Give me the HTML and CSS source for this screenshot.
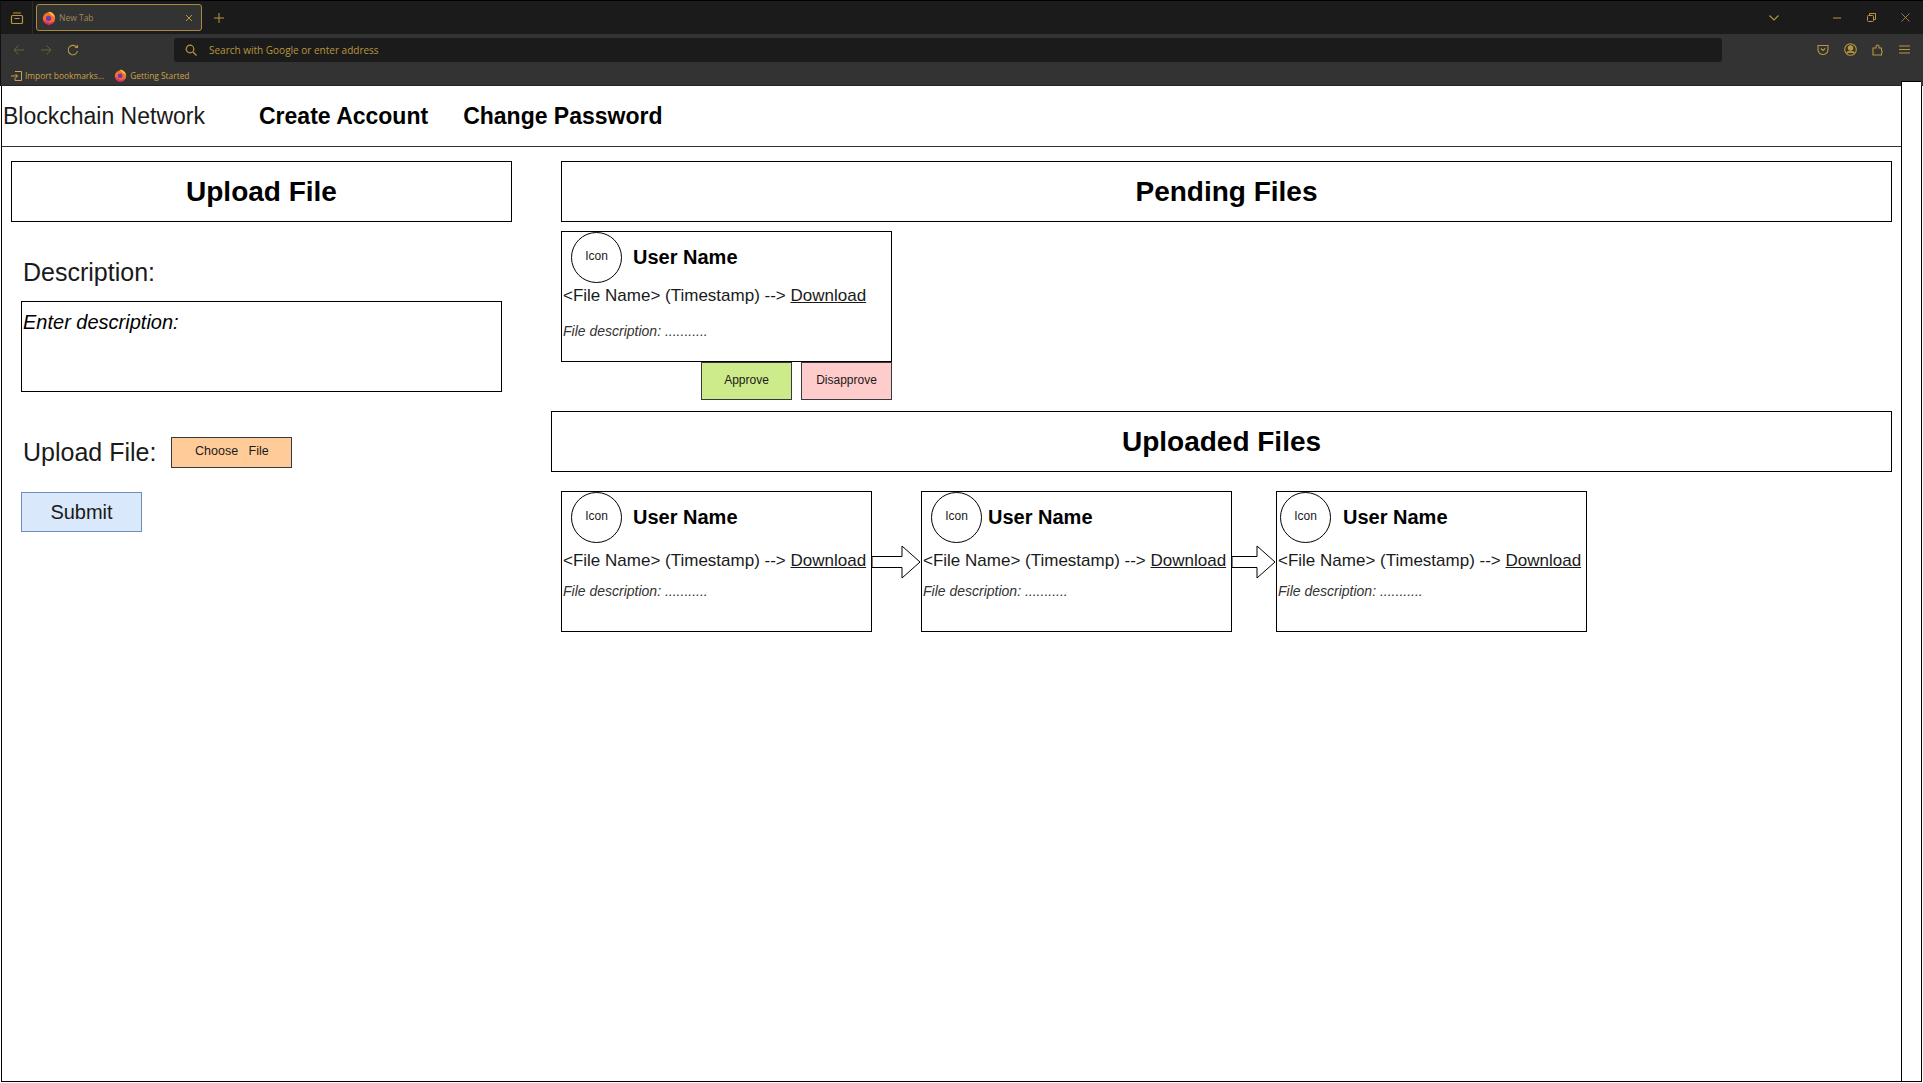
FILE: index.html
```html
<!DOCTYPE html>
<html lang="en">

<head>
    <meta charset="utf-8">
    <meta name="viewport" content="width=device-width, initial-scale=1">
    <title>New Tab</title>
    <link rel="stylesheet" href="styles.css">
</head>

<body>
    <div class="chrome">
        <div class="tabbar">
            <div class="tab-view">
                <svg width="16" height="16" viewBox="0 0 16 16" fill="none" stroke="currentColor" stroke-width="1.2">
                    <rect x="2.5" y="5.5" width="11" height="8" rx="1" />
                    <path d="M4 3h8M5.5 8.500h5" />
                </svg>
            </div>
            <div class="tab">
                <svg class="fx" width="14" height="14" viewBox="0 0 16 16">
                    <circle cx="8" cy="8.500" r="7" fill="#f4702c" />
                    <path d="M7 1c4-.5 7.500 3 8 7-1-1.500-2-2.200-3.500-2.500z" fill="#ffbd2e" />
                    <circle cx="7.500" cy="8.500" r="3" fill="#6a3ab0" />
                    <path d="M1 9c1 4 4 6.500 7 6.500s5-1.500 6-4c-2 2-5 2-7.500 1S2.500 10.500 1 9z" fill="#e8256f" />
                </svg>
                <span class="tab-title">New Tab</span>
                <svg class="tab-close" width="8" height="8" viewBox="0 0 8 8" stroke="currentColor" stroke-width="1">
                    <path d="M1 1l6 6M7 1l-6 6" />
                </svg>
            </div>
            <svg class="new-tab" width="10" height="10" viewBox="0 0 10 10" stroke="currentColor" stroke-width="1">
                <path d="M5 0v10M0 5h10" />
            </svg>
            <div class="tabbar-right">
                <svg class="tab-list" width="10" height="6" viewBox="0 0 10 6" fill="none" stroke="currentColor" stroke-width="1.100">
                    <path d="M.5.5 5 5 9.500.5" />
                </svg>
                <svg class="win-min" width="8" height="2" viewBox="0 0 8 2" stroke="currentColor">
                    <path d="M0 1h8" />
                </svg>
                <svg class="win-max" width="9" height="9" viewBox="0 0 9 9" fill="none" stroke="currentColor">
                    <rect x=".5" y="2.500" width="6" height="6" rx="1" />
                    <path d="M2.500 2.500V.5h6v6H6.500" />
                </svg>
                <svg class="win-close" width="9" height="9" viewBox="0 0 9 9" stroke="currentColor" stroke-width=".8">
                    <path d="M.5.5l8 8M8.500.5l-8 8" />
                </svg>
            </div>
        </div>

        <div class="toolbar">
            <svg class="tool dim back" width="12" height="12" viewBox="0 0 12 12" fill="none" stroke="currentColor">
                <path d="M11 6H1M5.500 1.500 1 6l4.500 4.500" />
            </svg>
            <svg class="tool dim forward" width="12" height="12" viewBox="0 0 12 12" fill="none" stroke="currentColor">
                <path d="M1 6h10M6.500 1.500 11 6l-4.500 4.500" />
            </svg>
            <svg class="tool reload" width="12" height="12" viewBox="0 0 12 12" fill="none" stroke="currentColor" stroke-width="1.100">
                <path d="M10.500 7a4.700 4.700 0 1 1-1.400-4.400" />
                <path d="M11 .5v3.500H7.500z" fill="currentColor" stroke="none" />
            </svg>
            <div class="urlbar">
                <svg width="12" height="12" viewBox="0 0 12 12" fill="none" stroke="currentColor" stroke-width="1.200">
                    <circle cx="5" cy="5" r="3.800" />
                    <path d="m8 8 3.500 3.500" />
                </svg>
                <span>Search with Google or enter address</span>
            </div>
            <div class="tool-right">
                <svg width="12" height="12" viewBox="0 0 12 12" fill="none" stroke="currentColor" stroke-width="1.100">
                    <path d="M1 1.500h10v4a5 5 0 0 1-10 0z" />
                    <path d="M3.800 4.500 6 6.500l2.200-2" />
                </svg>
                <svg width="13" height="13" viewBox="0 0 13 13" fill="none" stroke="currentColor" stroke-width="1.100">
                    <circle cx="6.500" cy="6.500" r="5.800" />
                    <circle cx="6.500" cy="5" r="2.200" fill="currentColor" />
                    <path d="M2.800 10c1-1.500 6.400-1.500 7.400 0" stroke-width="1.600" />
                </svg>
                <svg width="12" height="13" viewBox="0 0 12 13" fill="none" stroke="currentColor" stroke-width="1.100">
                    <path d="M1 12V5h3V3.500a1.500 1.500 0 0 1 3 0V5h2.500v2.500a1.500 1.500 0 0 1 0 2.500V12z" />
                </svg>
                <svg width="11" height="9" viewBox="0 0 11 9" stroke="currentColor">
                    <path d="M0 1h11M0 4.500h11M0 8h11" />
                </svg>
            </div>
        </div>

        <div class="bookmarks">
            <svg width="11" height="10" viewBox="0 0 11 10" fill="none" stroke="currentColor">
                <path d="M4 .5h6.500v9H4V7M0 5h6.500M4.500 3l2 2-2 2" />
            </svg>
            <span class="mark">Import bookmarks...</span>
            <svg class="fx" width="13" height="13" viewBox="0 0 16 16">
                <circle cx="8" cy="8.500" r="7" fill="#f4702c" />
                <path d="M7 1c4-.5 7.500 3 8 7-1-1.500-2-2.200-3.500-2.500z" fill="#ffbd2e" />
                <circle cx="7.500" cy="8.500" r="3" fill="#6a3ab0" />
                <path d="M1 9c1 4 4 6.500 7 6.500s5-1.500 6-4c-2 2-5 2-7.500 1S2.500 10.500 1 9z" fill="#e8256f" />
            </svg>
            <span>Getting Started</span>
        </div>
    </div>

    <div class="frame">
        <div class="main">
            <div class="nav">
                <span class="brand">Blockchain Network</span>
                <a href="#" class="nav-link">Create Account</a>
                <a href="#" class="nav-link">Change Password</a>
            </div>

            <div class="content">
                <div class="left">
                    <h2 class="title-box">Upload File</h2>
                    <label class="field-label desc-label" for="description">Description:</label>
                    <div class="desc-input" id="description">Enter description:</div>
                    <div class="upload-row">
                        <span class="field-label">Upload File:</span>
                        <button type="button" class="choose-btn">Choose &nbsp; File</button>
                    </div>
                    <button type="button" class="submit-btn">Submit</button>
                </div>

                <div class="right">
                    <h2 class="title-box pending-title">Pending Files</h2>

                    <div class="card pending-card">
                        <div class="card-head">
                            <div class="icon">Icon</div>
                            <strong class="user">User Name</strong>
                        </div>
                        <div class="file-line">&lt;File Name&gt; (Timestamp) --&gt; <a href="#">Download</a></div>
                        <div class="file-desc">File description: ...........</div>
                    </div>
                    <div class="actions">
                        <button type="button" class="approve">Approve</button>
                        <button type="button" class="disapprove">Disapprove</button>
                    </div>

                    <h2 class="title-box uploaded-title">Uploaded Files</h2>

                    <div class="chain">
                        <div class="card block">
                            <div class="card-head">
                                <div class="icon">Icon</div>
                                <strong class="user">User Name</strong>
                            </div>
                            <div class="file-line">&lt;File Name&gt; (Timestamp) --&gt; <a href="#">Download</a></div>
                            <div class="file-desc">File description: ...........</div>
                        </div>
                        <svg class="arrow" width="49" height="34" viewBox="0 0 49 34" fill="#fff" stroke="#000">
                            <path d="M0 11.500h30V1l18 16-18 16V22.500H0z" />
                        </svg>
                        <div class="card block block-second">
                            <div class="card-head">
                                <div class="icon">Icon</div>
                                <strong class="user">User Name</strong>
                            </div>
                            <div class="file-line">&lt;File Name&gt; (Timestamp) --&gt; <a href="#">Download</a></div>
                            <div class="file-desc">File description: ...........</div>
                        </div>
                        <svg class="arrow" width="44" height="34" viewBox="0 0 44 34" fill="#fff" stroke="#000">
                            <path d="M0 11.500h25V1l18 16-18 16V22.500H0z" />
                        </svg>
                        <div class="card block block-third">
                            <div class="card-head">
                                <div class="icon">Icon</div>
                                <strong class="user">User Name</strong>
                            </div>
                            <div class="file-line">&lt;File Name&gt; (Timestamp) --&gt; <a href="#">Download</a></div>
                            <div class="file-desc">File description: ...........</div>
                        </div>
                    </div>
                </div>
            </div>
        </div>
        <div class="scrollbar"></div>
    </div>
</body>

</html>
```

FILE: styles.css
```css
* {
    box-sizing: border-box;
}

html,
body {
    height: 100%;
}

body {
    margin: 0;
    background-color: #ffffff;
    font-family: "Liberation Sans", Arial, sans-serif;
    color: #000000;
    overflow: hidden;
}

/* browser window */
.chrome {
    height: 86px;
    background-color: #333333;
    color: #b8963f;
    font-family: "Open Sans", "Noto Sans", sans-serif;
    border-top: 1px solid #000000;
    border-left: 1px solid #111111;
    border-bottom: 1px solid #232323;
}

.tabbar {
    height: 33px;
    display: flex;
    align-items: center;
    background-color: #1c1b1b;
}

.tab-view {
    width: 32px;
    height: 33px;
    display: flex;
    align-items: center;
    justify-content: center;
    border-right: 1px solid #2b2a26;
}

.tab {
    width: 166px;
    height: 27px;
    margin-left: 3px;
    padding: 0 8px 0 5px;
    display: flex;
    align-items: center;
    border: 1px solid #a88a3c;
    border-radius: 3px;
    background-color: #333333;
    font-size: 8.5px;
}

.tab-title {
    margin-left: 3px;
    flex: 1;
    color: #9c8a58;
}

.new-tab {
    margin-left: 12px;
}

.tabbar-right {
    margin-left: auto;
    display: flex;
    align-items: center;
}

.tab-list {
    margin-right: 54px;
}

.win-min {
    margin-right: 26px;
}

.win-max {
    margin-right: 25px;
}

.win-close {
    margin-right: 13px;
}

.toolbar {
    height: 33px;
    padding-bottom: 2px;
    display: flex;
    align-items: center;
}

.tool {
    flex: none;
    margin-left: 13px;
}

.back {
    margin-left: 12px;
}

.tool.forward {
    margin-left: 15px;
}

.tool.reload {
    margin-left: 15px;
}

.dim {
    opacity: 0.45;
}

.urlbar {
    width: 1548px;
    height: 24px;
    margin-left: 95px;
    padding-left: 11px;
    display: flex;
    align-items: center;
    gap: 12px;
    border-radius: 3px;
    background-color: #1c1b1b;
    font-size: 10px;
}

.tool-right {
    flex: 1;
    padding-right: 13px;
    display: flex;
    align-items: center;
    justify-content: flex-end;
    gap: 15px;
}

.bookmarks {
    height: 17px;
    padding-left: 10px;
    display: flex;
    align-items: center;
    font-size: 8.4px;
    color: #c9a348;
}

.bookmarks span {
    margin-left: 3px;
}

.bookmarks .mark {
    margin-right: 10px;
}

/* wireframe page */
.frame {
    height: 996px;
    margin: 0 1px;
    display: flex;
    border-left: 1px solid #000000;
    border-right: 1px solid #000000;
    border-bottom: 1px solid #000000;
}

.main {
    flex: 1;
    min-width: 0;
}

.scrollbar {
    flex: none;
    width: 20px;
    margin-top: -5px;
    background-color: #ffffff;
    border-left: 1px solid #000000;
    border-top: 1px solid #000000;
}

.nav {
    height: 61px;
    padding-left: 1px;
    display: flex;
    align-items: center;
    border-bottom: 1px solid #333333;
}

.brand {
    width: 256px;
    padding-top: 1px;
    font-size: 23px;
    color: #1a1a1a;
}

.nav-link {
    margin-right: 35px;
    padding-top: 1px;
    font-size: 23px;
    font-weight: bold;
    color: #000000;
    text-decoration: none;
}

.content {
    display: flex;
    padding: 14px 9px 0 9px;
}

.left {
    flex: none;
    width: 501px;
}

.right {
    flex: none;
    width: 1341px;
    margin-left: 39px;
}

.title-box {
    height: 61px;
    margin: 0;
    display: flex;
    align-items: center;
    justify-content: center;
    border: 1px solid #000000;
    font-size: 28px;
    font-weight: bold;
}

.field-label {
    font-size: 25px;
    color: #1a1a1a;
}

.desc-label {
    display: block;
    margin: 35px 0 0 12px;
    line-height: 30px;
}

.desc-input {
    width: 481px;
    height: 91px;
    margin: 14px 0 0 10px;
    padding: 9px 1px;
    border: 1px solid #000000;
    font-size: 20px;
    font-style: italic;
}

.upload-row {
    margin: 45px 0 0 12px;
    display: flex;
    align-items: center;
    gap: 15px;
}

.choose-btn {
    width: 121px;
    height: 31px;
    padding: 0 0 3px;
    border: 1px solid #36393d;
    background-color: #ffcc99;
    font-family: inherit;
    font-size: 12.500px;
    color: #1a1a1a;
}

.submit-btn {
    display: block;
    width: 121px;
    height: 40px;
    margin: 24px 0 0 10px;
    border: 1px solid #6c8ebf;
    background-color: #dae8fc;
    font-family: inherit;
    font-size: 20px;
    color: #1a1a1a;
}

.pending-title {
    margin-left: 10px;
}

.card {
    border: 1px solid #000000;
    background-color: #ffffff;
}

.card-head {
    height: 52px;
    margin-top: -1px;
    padding-left: 9px;
    display: flex;
    align-items: center;
}

.icon {
    width: 51px;
    height: 51px;
    flex: none;
    display: flex;
    align-items: center;
    justify-content: center;
    padding-bottom: 2px;
    border: 1px solid #000000;
    border-radius: 50%;
    font-size: 12px;
    color: #1a1a1a;
}

.user {
    margin-left: 11px;
    font-size: 20px;
}

.file-line {
    padding-left: 1px;
    font-size: 17px;
    white-space: nowrap;
    color: #1a1a1a;
}

.file-line a {
    color: #1a1a1a;
}

.file-desc {
    padding-left: 1px;
    font-size: 14px;
    font-style: italic;
    white-space: nowrap;
    color: #333333;
}

.pending-card {
    width: 331px;
    height: 131px;
    margin: 9px 0 0 10px;
}

.pending-card .file-line {
    margin-top: 3px;
}

.pending-card .file-desc {
    margin-top: 17px;
}

.actions {
    width: 331px;
    margin-left: 10px;
    display: flex;
    justify-content: flex-end;
    gap: 9px;
}

.actions button {
    width: 91px;
    height: 38px;
    padding: 0 0 3px;
    border: 1px solid #36393d;
    font-family: inherit;
    font-size: 12px;
    color: #1a1a1a;
}

.approve {
    background-color: #cdeb8b;
}

.disapprove {
    background-color: #ffcccc;
}

.uploaded-title {
    margin-top: 11px;
}

.chain {
    margin: 19px 0 0 10px;
    display: flex;
    align-items: flex-start;
}

.block {
    width: 311px;
    height: 141px;
    flex: none;
}

.block .file-line {
    margin-top: 8px;
}

.block .file-desc {
    margin-top: 12px;
}

.block-second .user {
    margin-left: 6px;
}

.block-third .card-head {
    padding-left: 3px;
}

.block-third .user {
    margin-left: 12px;
}

.arrow {
    flex: none;
    margin-top: 54px;
}
```
